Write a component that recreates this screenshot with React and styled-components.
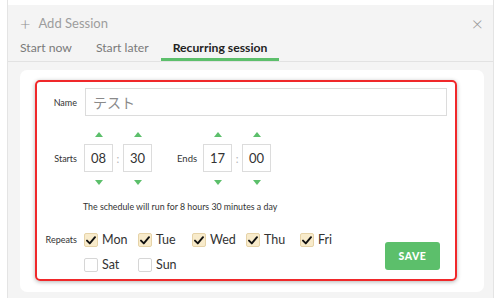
import styled, { createGlobalStyle } from 'styled-components';

const GlobalStyle = createGlobalStyle`
  html, body {
    margin: 0;
    padding: 0;
    background: #ffffff;
  }
  body {
    font-family: Lato, "Noto Sans", "Liberation Sans", sans-serif;
    color: #333;
  }
  * { box-sizing: border-box; }
`;

const days = [
    { name: 'Mon', checked: true },
    { name: 'Tue', checked: true },
    { name: 'Wed', checked: true },
    { name: 'Thu', checked: true },
    { name: 'Fri', checked: true },
    { name: 'Sat', checked: false },
    { name: 'Sun', checked: false },
];

const Spinner = ({ value }) => (
    <SpinCol>
        <Arrow up />
        <TimeBox>{value}</TimeBox>
        <Arrow />
    </SpinCol>
);

const Check = () => (
    <svg width="10" height="9" viewBox="0 0 10 9">
        <path d="M1 4.6 L3.8 7.4 L9 1.2" fill="none" stroke="#111" strokeWidth="1.9" strokeLinecap="round" strokeLinejoin="round" />
    </svg>
);

const App = () => {
    return (
        <>
            <GlobalStyle />
            <Panel>
                <TopStrip />
                <Header>
                    <Plus>+</Plus>
                    <HeaderTitle>Add Session</HeaderTitle>
                    <Close>×</Close>
                </Header>
                <Tabs>
                    <Tab>Start now</Tab>
                    <Tab>Start later</Tab>
                    <Tab active>Recurring session</Tab>
                </Tabs>
                <Body>
                    <Card>
                        <Form>
                            <NameRow>
                                <Label>Name</Label>
                                <NameInput>テスト</NameInput>
                            </NameRow>
                            <TimeRow>
                                <Label>Starts</Label>
                                <Spinner value="08" />
                                <Colon>:</Colon>
                                <Spinner value="30" />
                                <EndsLabel>Ends</EndsLabel>
                                <Spinner value="17" />
                                <Colon>:</Colon>
                                <Spinner value="00" />
                            </TimeRow>
                            <Summary>The schedule will run for 8 hours 30 minutes a day</Summary>
                            <RepeatRow>
                                <Label>Repeats</Label>
                                <DaysGrid>
                                    {days.map((d) => (
                                        <Day key={d.name}>
                                            <Box checked={d.checked}>{d.checked && <Check />}</Box>
                                            {d.name}
                                        </Day>
                                    ))}
                                </DaysGrid>
                                <SaveButton>SAVE</SaveButton>
                            </RepeatRow>
                        </Form>
                    </Card>
                </Body>
            </Panel>
        </>
    );
};

const Panel = styled.div`
    margin-left: 7px;
    width: 487px;
    height: 298px;
    background: #f4f4f4;
    border-left: 1px solid #e4e4e4;
    border-right: 1px solid #e4e4e4;
    display: flex;
    flex-direction: column;
`;

const TopStrip = styled.div`
    height: 5px;
    background: #fff;
`;

const Header = styled.div`
    height: 32px;
    padding: 4px 10px 0 12px;
    display: flex;
    align-items: center;
    color: #9d9d9d;
    font-size: 13px;
`;

const Plus = styled.span`
    font-size: 18px;
    font-weight: 300;
    color: #8f8f8f;
    margin-right: 8px;
    line-height: 1;
`;

const HeaderTitle = styled.span`
    flex: 1;
`;

const Close = styled.span`
    font-size: 20px;
    font-weight: 300;
    color: #9a9a9a;
    line-height: 1;
`;

const Tabs = styled.div`
    display: flex;
    height: 25px;
    border-bottom: 1px solid #e2e2e2;
`;

const Tab = styled.div`
    padding: 0 12px;
    height: 24px;
    line-height: 21px;
    font-size: 12.2px;
    color: ${(p) => (p.active ? '#222' : '#7a7a7a')};
    font-weight: ${(p) => (p.active ? 700 : 400)};
    border-bottom: 3px solid ${(p) => (p.active ? '#5cbf6b' : 'transparent')};
`;

const Body = styled.div`
    flex: 1;
    padding: 8px 9px 6px 12px;
`;

const Card = styled.div`
    background: #fff;
    border-radius: 7px;
    height: 222px;
    padding: 10px 27px 11px 15px;
`;

const Form = styled.div`
    height: 201px;
    border: 2px solid #f0282a;
    border-radius: 5px;
    box-shadow: 0 1px 4px rgba(0, 0, 0, 0.3);
    padding: 6px 8px 7px 4px;
    display: flex;
    flex-direction: column;
`;

const Label = styled.div`
    width: 36px;
    margin-right: 7px;
    text-align: right;
    font-size: 9px;
    color: #333;
    flex-shrink: 0;
`;

const NameRow = styled.div`
    display: flex;
    align-items: center;
`;

const NameInput = styled.div`
    flex: 1;
    margin-left: 1px;
    height: 28px;
    border: 1px solid #dcdcdc;
    padding-left: 7px;
    display: flex;
    align-items: center;
    font-family: "Noto Sans CJK JP", sans-serif;
    font-size: 14px;
    color: #8a8a8a;
`;

const TimeRow = styled.div`
    display: flex;
    align-items: center;
    margin-top: 16px;
`;

const SpinCol = styled.div`
    display: flex;
    flex-direction: column;
    align-items: center;
    gap: 7px;
`;

const Arrow = styled.div`
    width: 0;
    height: 0;
    border-left: 4px solid transparent;
    border-right: 4px solid transparent;
    ${(p) => (p.up ? 'border-bottom: 5px solid #5cbf6b;' : 'border-top: 5px solid #5cbf6b; margin-top: 1px;')}
`;

const TimeBox = styled.div`
    width: 29px;
    height: 28px;
    border: 1px solid #dcdcdc;
    display: flex;
    align-items: center;
    justify-content: center;
    font-size: 13px;
    color: #333;
`;

const Colon = styled.div`
    width: 10px;
    text-align: center;
    color: #b5b5b5;
    font-size: 11px;
`;

const EndsLabel = styled.div`
    margin-left: 25px;
    margin-right: 6px;
    font-size: 9.5px;
    color: #333;
`;

const Summary = styled.div`
    margin-top: 16px;
    padding-left: 42px;
    font-size: 8.8px;
    line-height: 12px;
    color: #333;
`;

const RepeatRow = styled.div`
    display: flex;
    align-items: flex-start;
    margin-top: 20px;
    & > ${Label} {
        line-height: 14px;
    }
`;

const DaysGrid = styled.div`
    display: grid;
    grid-template-columns: repeat(5, 54px);
    row-gap: 11px;
`;

const Day = styled.label`
    display: flex;
    align-items: center;
    gap: 4px;
    font-size: 12.5px;
    line-height: 14px;
    color: #333;
`;

const Box = styled.span`
    width: 14px;
    height: 14px;
    border-radius: 2px;
    border: 1px solid ${(p) => (p.checked ? '#e6d3a8' : '#d6d6d6')};
    background: ${(p) => (p.checked ? '#f8ebcb' : '#fff')};
    display: flex;
    align-items: center;
    justify-content: center;
`;

const SaveButton = styled.button`
    margin-left: auto;
    margin-top: 9px;
    margin-right: 7px;
    width: 55px;
    height: 28px;
    border: none;
    border-radius: 3px;
    background: #5cbf6b;
    color: #fff;
    font-family: Lato, "Liberation Sans", sans-serif;
    font-weight: 900;
    font-size: 10.5px;
    letter-spacing: 0.5px;
`;

export default App;
